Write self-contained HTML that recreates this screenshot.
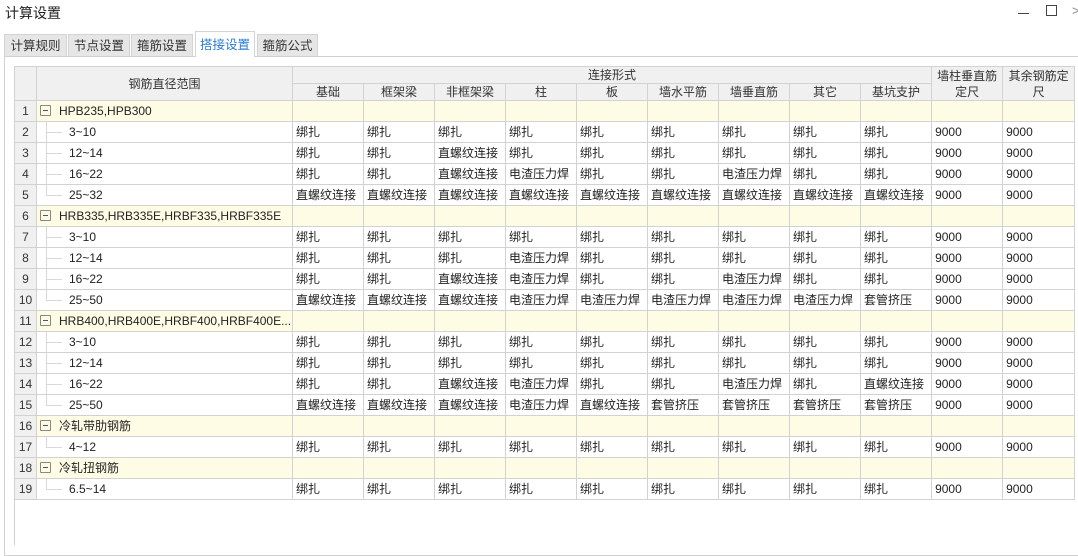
<!DOCTYPE html>
<html><head><meta charset="utf-8"><style>
body{margin:0;width:1078px;height:545px;background:#fff;overflow:hidden;position:relative;font-family:"Liberation Sans","Noto Sans CJK SC",sans-serif;font-size:12px;color:#222}
.title{position:absolute;left:5px;top:3px;font-size:14px;color:#222}
.wb{position:absolute;top:0}
.tab{position:absolute;top:34px;height:22px;background:#e6e6e6;border:1px solid #d4d4d4;border-bottom:none;box-sizing:border-box;text-align:center;line-height:22px;font-size:12.5px;color:#333}
.tab.a{background:#fff;color:#2a7bd6;top:31px;height:26px;line-height:27px;z-index:2}
.panel{position:absolute;left:4px;top:56px;width:1080px;height:500px;border:1px solid #d0d0d0;box-sizing:border-box}
.tl{position:absolute;left:14px;top:66px;bottom:0;border-left:1px solid #d0d0d0}
table{position:absolute;left:14px;top:66px;border-collapse:collapse;table-layout:fixed;width:1061px}
td{border:1px solid #d2d2d2;height:20px;padding:0 0 0 3px;white-space:nowrap;overflow:hidden;line-height:20px}
tr.h td{background:#f0f0f0;text-align:center;padding:0;height:16px;line-height:16px;color:#333}
td.n{background:#f0f0f0;text-align:center;padding:0;color:#333}
tr.g td{background:#fffce6}
tr.g td.n{background:#f0f0f0}
td.nm{position:relative;padding:0}
.bx{position:absolute;left:3px;top:4px;width:11px;height:11px;border:1px solid #888;box-sizing:border-box;border-radius:1px}
.bx:after{content:"";position:absolute;left:2px;top:4px;width:5px;height:1px;background:#555}
.gt{position:absolute;left:22px;top:0}
.vl{position:absolute;left:9px;top:-1px;bottom:-1px;border-left:1px solid #d8d8d8}
.vl.l{bottom:10px}
.hl{position:absolute;left:9px;top:10px;width:16px;border-top:1px solid #d8d8d8}
.ct{position:absolute;left:32px;top:0}
</style></head><body>
<div class="title">计算设置</div>
<div class="wb" style="left:1018px;top:13px;width:11px;border-top:1px solid #444"></div>
<div class="wb" style="left:1046px;top:5px;width:9px;height:9px;border:1px solid #444"></div>
<div class="wb" style="left:1072px;top:3px;color:#888;font-size:13px">&gt;</div>
<div class="panel"></div>
<div class="tab" style="left:4px;width:63px">计算规则</div>
<div class="tab" style="left:68px;width:62px">节点设置</div>
<div class="tab" style="left:131px;width:62px">箍筋设置</div>
<div class="tab a" style="left:195px;width:60px">搭接设置</div>
<div class="tab" style="left:257px;width:61px">箍筋公式</div>
<div class="tl"></div>
<table>
<colgroup><col style="width:22px"><col style="width:256px"><col style="width:71px"><col style="width:71px"><col style="width:71px"><col style="width:71px"><col style="width:71px"><col style="width:71px"><col style="width:71px"><col style="width:71px"><col style="width:71px"><col style="width:71px"><col style="width:72px"></colgroup>
<tr class="h"><td rowspan="2"></td><td rowspan="2">钢筋直径范围</td><td colspan="9">连接形式</td><td rowspan="2">墙柱垂直筋<br>定尺</td><td rowspan="2">其余钢筋定<br>尺</td></tr>
<tr class="h"><td>基础</td><td>框架梁</td><td>非框架梁</td><td>柱</td><td>板</td><td>墙水平筋</td><td>墙垂直筋</td><td>其它</td><td>基坑支护</td></tr>
<tr class="g"><td class="n">1</td><td class="nm"><span class="bx"></span><span class="gt">HPB235,HPB300</span></td><td></td><td></td><td></td><td></td><td></td><td></td><td></td><td></td><td></td><td></td><td></td></tr>
<tr><td class="n">2</td><td class="nm"><span class="vl"></span><span class="hl"></span><span class="ct">3~10</span></td><td>绑扎</td><td>绑扎</td><td>绑扎</td><td>绑扎</td><td>绑扎</td><td>绑扎</td><td>绑扎</td><td>绑扎</td><td>绑扎</td><td>9000</td><td>9000</td></tr>
<tr><td class="n">3</td><td class="nm"><span class="vl"></span><span class="hl"></span><span class="ct">12~14</span></td><td>绑扎</td><td>绑扎</td><td>直螺纹连接</td><td>绑扎</td><td>绑扎</td><td>绑扎</td><td>绑扎</td><td>绑扎</td><td>绑扎</td><td>9000</td><td>9000</td></tr>
<tr><td class="n">4</td><td class="nm"><span class="vl"></span><span class="hl"></span><span class="ct">16~22</span></td><td>绑扎</td><td>绑扎</td><td>直螺纹连接</td><td>电渣压力焊</td><td>绑扎</td><td>绑扎</td><td>电渣压力焊</td><td>绑扎</td><td>绑扎</td><td>9000</td><td>9000</td></tr>
<tr><td class="n">5</td><td class="nm"><span class="vl l"></span><span class="hl"></span><span class="ct">25~32</span></td><td>直螺纹连接</td><td>直螺纹连接</td><td>直螺纹连接</td><td>直螺纹连接</td><td>直螺纹连接</td><td>直螺纹连接</td><td>直螺纹连接</td><td>直螺纹连接</td><td>直螺纹连接</td><td>9000</td><td>9000</td></tr>
<tr class="g"><td class="n">6</td><td class="nm"><span class="bx"></span><span class="gt">HRB335,HRB335E,HRBF335,HRBF335E</span></td><td></td><td></td><td></td><td></td><td></td><td></td><td></td><td></td><td></td><td></td><td></td></tr>
<tr><td class="n">7</td><td class="nm"><span class="vl"></span><span class="hl"></span><span class="ct">3~10</span></td><td>绑扎</td><td>绑扎</td><td>绑扎</td><td>绑扎</td><td>绑扎</td><td>绑扎</td><td>绑扎</td><td>绑扎</td><td>绑扎</td><td>9000</td><td>9000</td></tr>
<tr><td class="n">8</td><td class="nm"><span class="vl"></span><span class="hl"></span><span class="ct">12~14</span></td><td>绑扎</td><td>绑扎</td><td>绑扎</td><td>电渣压力焊</td><td>绑扎</td><td>绑扎</td><td>绑扎</td><td>绑扎</td><td>绑扎</td><td>9000</td><td>9000</td></tr>
<tr><td class="n">9</td><td class="nm"><span class="vl"></span><span class="hl"></span><span class="ct">16~22</span></td><td>绑扎</td><td>绑扎</td><td>直螺纹连接</td><td>电渣压力焊</td><td>绑扎</td><td>绑扎</td><td>电渣压力焊</td><td>绑扎</td><td>绑扎</td><td>9000</td><td>9000</td></tr>
<tr><td class="n">10</td><td class="nm"><span class="vl l"></span><span class="hl"></span><span class="ct">25~50</span></td><td>直螺纹连接</td><td>直螺纹连接</td><td>直螺纹连接</td><td>电渣压力焊</td><td>电渣压力焊</td><td>电渣压力焊</td><td>电渣压力焊</td><td>电渣压力焊</td><td>套管挤压</td><td>9000</td><td>9000</td></tr>
<tr class="g"><td class="n">11</td><td class="nm"><span class="bx"></span><span class="gt">HRB400,HRB400E,HRBF400,HRBF400E...</span></td><td></td><td></td><td></td><td></td><td></td><td></td><td></td><td></td><td></td><td></td><td></td></tr>
<tr><td class="n">12</td><td class="nm"><span class="vl"></span><span class="hl"></span><span class="ct">3~10</span></td><td>绑扎</td><td>绑扎</td><td>绑扎</td><td>绑扎</td><td>绑扎</td><td>绑扎</td><td>绑扎</td><td>绑扎</td><td>绑扎</td><td>9000</td><td>9000</td></tr>
<tr><td class="n">13</td><td class="nm"><span class="vl"></span><span class="hl"></span><span class="ct">12~14</span></td><td>绑扎</td><td>绑扎</td><td>绑扎</td><td>绑扎</td><td>绑扎</td><td>绑扎</td><td>绑扎</td><td>绑扎</td><td>绑扎</td><td>9000</td><td>9000</td></tr>
<tr><td class="n">14</td><td class="nm"><span class="vl"></span><span class="hl"></span><span class="ct">16~22</span></td><td>绑扎</td><td>绑扎</td><td>直螺纹连接</td><td>电渣压力焊</td><td>绑扎</td><td>绑扎</td><td>电渣压力焊</td><td>绑扎</td><td>直螺纹连接</td><td>9000</td><td>9000</td></tr>
<tr><td class="n">15</td><td class="nm"><span class="vl l"></span><span class="hl"></span><span class="ct">25~50</span></td><td>直螺纹连接</td><td>直螺纹连接</td><td>直螺纹连接</td><td>电渣压力焊</td><td>直螺纹连接</td><td>套管挤压</td><td>套管挤压</td><td>套管挤压</td><td>套管挤压</td><td>9000</td><td>9000</td></tr>
<tr class="g"><td class="n">16</td><td class="nm"><span class="bx"></span><span class="gt">冷轧带肋钢筋</span></td><td></td><td></td><td></td><td></td><td></td><td></td><td></td><td></td><td></td><td></td><td></td></tr>
<tr><td class="n">17</td><td class="nm"><span class="vl l"></span><span class="hl"></span><span class="ct">4~12</span></td><td>绑扎</td><td>绑扎</td><td>绑扎</td><td>绑扎</td><td>绑扎</td><td>绑扎</td><td>绑扎</td><td>绑扎</td><td>绑扎</td><td>9000</td><td>9000</td></tr>
<tr class="g"><td class="n">18</td><td class="nm"><span class="bx"></span><span class="gt">冷轧扭钢筋</span></td><td></td><td></td><td></td><td></td><td></td><td></td><td></td><td></td><td></td><td></td><td></td></tr>
<tr><td class="n">19</td><td class="nm"><span class="vl l"></span><span class="hl"></span><span class="ct">6.5~14</span></td><td>绑扎</td><td>绑扎</td><td>绑扎</td><td>绑扎</td><td>绑扎</td><td>绑扎</td><td>绑扎</td><td>绑扎</td><td>绑扎</td><td>9000</td><td>9000</td></tr>
</table>
</body></html>
